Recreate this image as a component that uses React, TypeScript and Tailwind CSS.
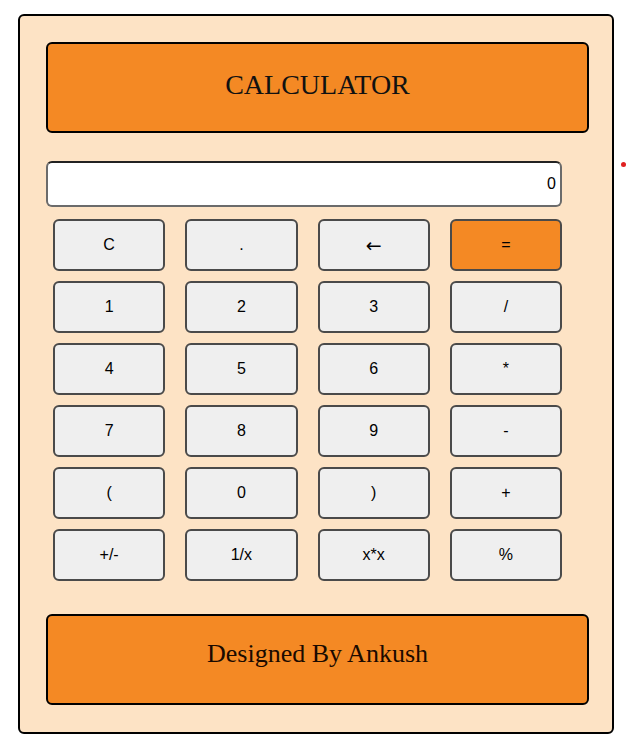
const rows = [
  ["C", ".", "←", "="],
  ["1", "2", "3", "/"],
  ["4", "5", "6", "*"],
  ["7", "8", "9", "-"],
  ["(", "0", ")", "+"],
  ["+/-", "1/x", "x*x", "%"],
];

const App = () => {
  return (
    <div className="relative min-h-[753px] bg-white pt-[14px] pl-[18px]">
      <div className="w-[596px] h-[720px] rounded-[6px] border-2 border-black bg-[#fde3c5] pt-[26px] pl-[26px]">
        <div className="w-[543px] h-[91px] rounded-[6px] border-2 border-black bg-[#f48924] flex items-center justify-center pb-[6px]">
          <h1 className="font-['Liberation_Serif',serif] text-[28px] text-[#111]">
            CALCULATOR
          </h1>
        </div>

        <div className="mt-[28px] w-[516px] h-[46px] rounded-[6px] border-2 border-[#6b6b6b] border-t-[#222] bg-white flex items-center justify-end pr-[4px] font-['Liberation_Sans',sans-serif] text-[16px] text-black">
          0
        </div>

        <div className="mt-[12px] ml-[7px] w-[509px] grid grid-cols-4 gap-x-[20px] gap-y-[10px]">
          {rows.flat().map((label, i) => (
            <button
              key={i}
              className={`h-[52px] rounded-[6px] border-2 border-[#4a4a4a] text-black ${
                label === "←"
                  ? "font-['DejaVu_Sans',sans-serif] text-[19px]"
                  : "font-['Liberation_Sans',sans-serif] text-[16px]"
              } ${label === "=" ? "bg-[#f48924]" : "bg-[#efefef]"}`}
            >
              {label}
            </button>
          ))}
        </div>

        <div className="mt-[33px] w-[543px] h-[91px] rounded-[6px] border-2 border-black bg-[#f48924] flex items-center justify-center pb-[12px]">
          <p className="font-['Liberation_Serif',serif] text-[26px] text-[#1a0a00]">
            Designed By Ankush
          </p>
        </div>
      </div>

      <span className="absolute left-[621px] top-[162px] w-[5px] h-[5px] rounded-full bg-[#e02020]" />
    </div>
  );
};

export default App;
